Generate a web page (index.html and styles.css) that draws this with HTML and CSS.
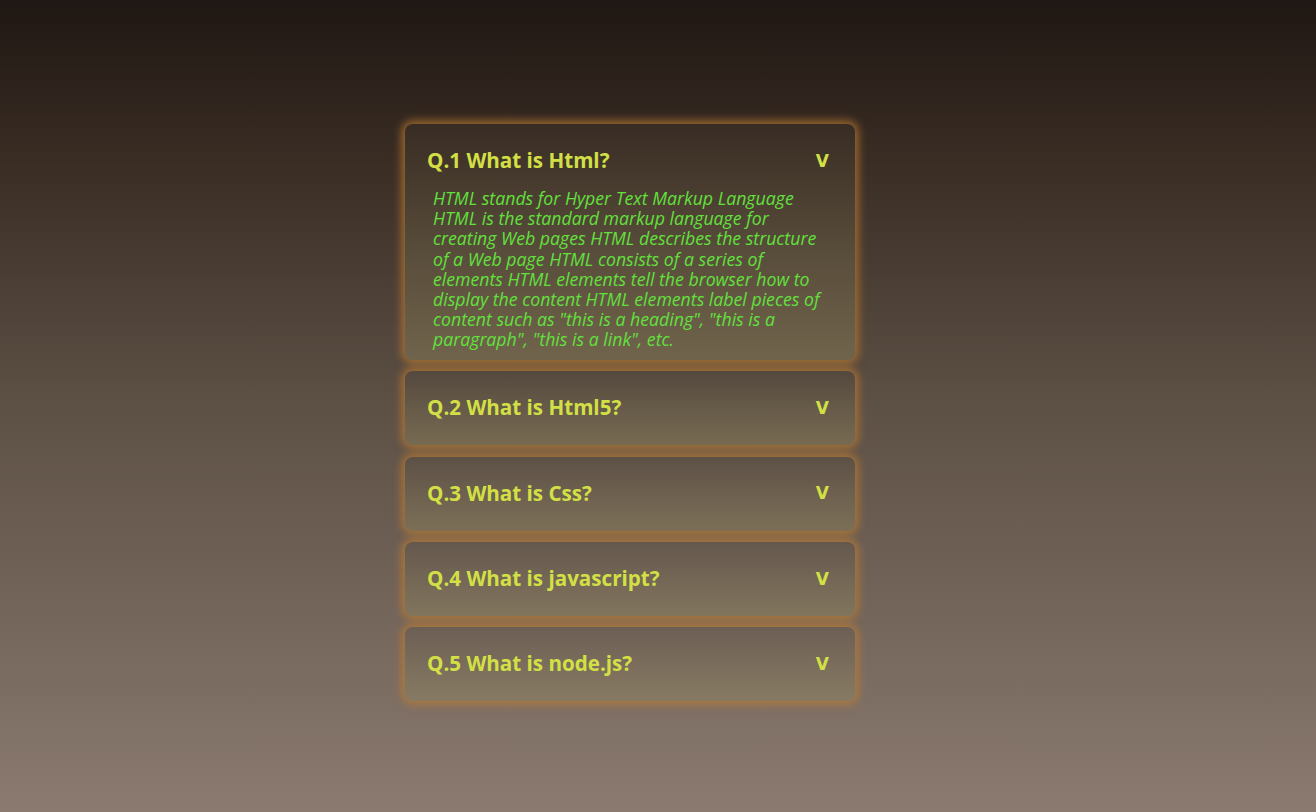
FILE: index.html
```html
<!DOCTYPE html>
<html lang="en">
<head>
<meta charset="utf-8">
<title>FAQ</title>
<link rel="stylesheet" href="styles.css">
</head>
<body>
<main class="faq">
  <section class="card open">
    <div class="q"><span class="q-text">Q.1 What is Html?</span><span class="chev">V</span></div>
    <p class="a">HTML stands for Hyper Text Markup Language HTML is the standard markup language for creating Web pages HTML describes the structure of a Web page HTML consists of a series of elements HTML elements tell the browser how to display the content HTML elements label pieces of content such as "this is a heading", "this is a paragraph", "this is a link", etc.</p>
  </section>
  <section class="card">
    <div class="q"><span class="q-text">Q.2 What is Html5?</span><span class="chev">V</span></div>
  </section>
  <section class="card">
    <div class="q"><span class="q-text">Q.3 What is Css?</span><span class="chev">V</span></div>
  </section>
  <section class="card">
    <div class="q"><span class="q-text">Q.4 What is javascript?</span><span class="chev">V</span></div>
  </section>
  <section class="card">
    <div class="q"><span class="q-text">Q.5 What is node.js?</span><span class="chev">V</span></div>
  </section>
</main>
</body>
</html>
```
FILE: styles.css
```css
* { box-sizing: border-box; }
html, body { height: 100%; }
body {
  margin: 0;
  background: linear-gradient(180deg, #1f1713 0%, #3a2d24 20%, #5d5045 50%, #8a7a70 100%);
  font-family: "Open Sans", "DejaVu Sans", sans-serif;
  display: flex;
  justify-content: center;
  padding-top: 124px;
  padding-right: 56px;
}
.faq {
  width: 450px;
  display: flex;
  flex-direction: column;
  gap: 11.3px;
}
.card {
  border-radius: 8px;
  padding: 22px 22px;
  background: linear-gradient(180deg, rgba(70,60,52,0.2) 0%, rgba(150,140,95,0.4) 100%);
  box-shadow: 0 0 10px 3px rgba(190,125,50,0.8);
}
.q {
  display: flex;
  justify-content: space-between;
  align-items: center;
  height: 30px;
  color: #d3e045;
  font-weight: 700;
  font-size: 20.6px;
}
.q-text { margin-top: -2px; }
.chev {
  font-family: "DejaVu Sans", sans-serif;
  font-size: 17px;
  font-weight: 700;
  margin-right: 4px;
  margin-top: -1px;
}
.a {
  margin: 12px 10px -11.5px 6px;
  color: #62e03c;
  font-style: italic;
  font-size: 17.7px;
  line-height: 20.2px;
}
```
